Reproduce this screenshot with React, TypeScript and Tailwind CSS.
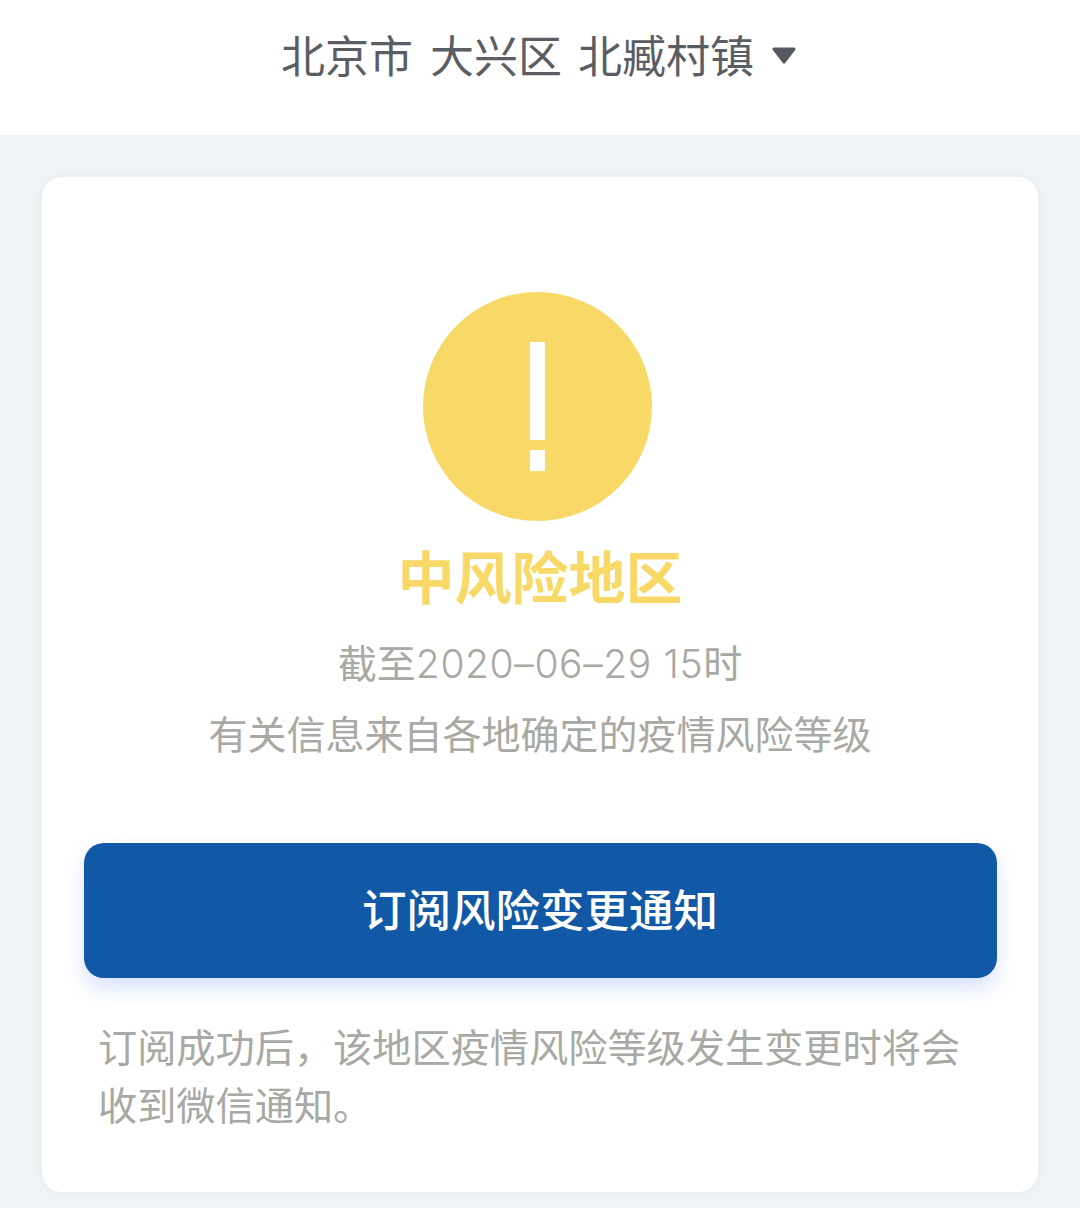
export default function App() {
  const font = { fontFamily: '"Noto Sans CJK SC", "Noto Sans", sans-serif' };

  return (
    <div className="w-[1080px] h-[1208px] overflow-hidden bg-[#eff3f6]" style={font}>
      {/* Location selector */}
      <div className="h-[135px] bg-white flex items-start justify-center pt-[24px] pr-[3px]">
        <div className="flex items-center text-[#5a5d64] text-[44px] leading-[60px] font-normal">
          <span>北京市</span>
          <span className="ml-[17px]">大兴区</span>
          <span className="ml-[16px]">北臧村镇</span>
          <svg viewBox="0 0 24 17" className="ml-[18px] mt-[2px] w-[24px] h-[17px]">
            <path d="M2 2 H22 L12 15 Z" fill="#55585f" stroke="#55585f" strokeWidth="3" strokeLinejoin="round" />
          </svg>
        </div>
      </div>

      {/* Risk card */}
      <div className="mx-[42px] mt-[42px] h-[1015px] bg-white rounded-[20px] flex flex-col items-center pt-[115px] shadow-[0_0_6px_rgba(200,210,220,0.25)]">
        <div className="w-[229px] h-[229px] mr-[5px] rounded-full bg-[#f8d968] flex flex-col items-center pt-[50px]">
          <div className="w-[15px] h-[98px] bg-white" />
          <div className="w-[15px] h-[21px] mt-[10px] bg-white" />
        </div>

        <p className="mt-[12px] text-[57px] leading-[82px] font-bold text-[#f8d968]">中风险地区</p>
        <p className="mt-[20px] text-[39px] leading-[52px] font-normal text-[#a8a8a4]">
          截至<span style={{ fontFamily: 'Inter, sans-serif' }} className="font-light tracking-[0.6px]">2020–06–29 15</span>时
        </p>
        <p className="mt-[16px] text-[39px] leading-[52px] font-normal text-[#a8a8a4]">有关信息来自各地确定的疫情风险等级</p>

        <button className="mt-[85px] w-[913px] h-[135px] pb-[5px] rounded-[20px] bg-[#1159a6] text-white text-[44.5px] font-medium shadow-[0_10px_20px_rgba(60,110,240,0.2)]">
          订阅风险变更通知
        </button>

        <p className="mt-[38px] w-[884px] pr-[4px] text-[39.2px] leading-[58px] font-normal text-[#a8a8a4]">
          订阅成功后，该地区疫情风险等级发生变更时将会收到微信通知。
        </p>
      </div>
    </div>
  );
}
